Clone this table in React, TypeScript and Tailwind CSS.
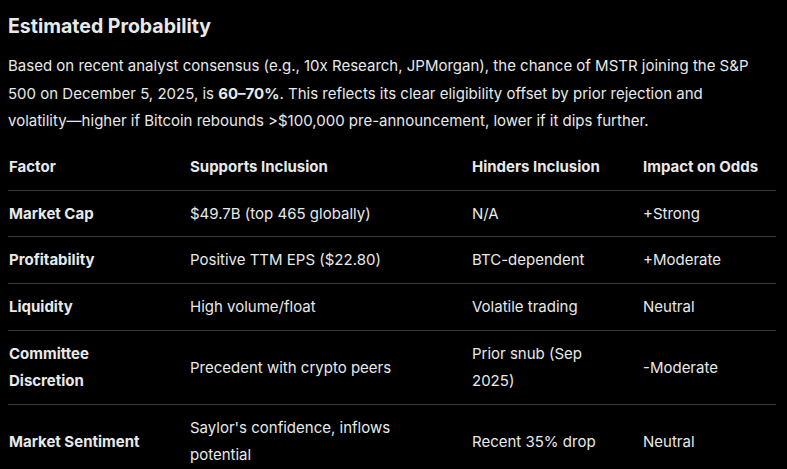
import React from "react";

const rows: { f: string[]; s: string[]; h: string[]; i: string }[] = [
  { f: ["Market Cap"], s: ["$49.7B (top 465 globally)"], h: ["N/A"], i: "+Strong" },
  { f: ["Profitability"], s: ["Positive TTM EPS ($22.80)"], h: ["BTC-dependent"], i: "+Moderate" },
  { f: ["Liquidity"], s: ["High volume/float"], h: ["Volatile trading"], i: "Neutral" },
  { f: ["Committee", "Discretion"], s: ["Precedent with crypto peers"], h: ["Prior snub (Sep", "2025)"], i: "-Moderate" },
  { f: ["Market Sentiment"], s: ["Saylor's confidence, inflows", "potential"], h: ["Recent 35% drop"], i: "Neutral" },
];

function Lines({ l }: { l: string[] }) {
  return (
    <>
      {l.map((x, k) => (
        <div key={k}>{x}</div>
      ))}
    </>
  );
}

export default function App() {
  return (
    <div
      className="min-h-[469px] w-[787px] bg-black text-[#e7e9ea] px-2 pt-[12px]"
      style={{ fontFamily: 'Inter, "Noto Sans", sans-serif' }}
    >
      <h2 className="text-[19.5px] leading-[28px] font-bold">Estimated Probability</h2>
      <div className="mt-[12px] text-[15px] leading-[27.5px]">
        <div>Based on recent analyst consensus (e.g., 10x Research, JPMorgan), the chance of MSTR joining the S&amp;P</div>
        <div>
          500 on December 5, 2025, is <b className="font-bold">60–70%</b>. This reflects its clear eligibility offset by
          prior rejection and
        </div>
        <div>volatility—higher if Bitcoin rebounds &gt;$100,000 pre-announcement, lower if it dips further.</div>
      </div>
      <table className="mt-[8px] w-[768px] table-fixed border-collapse text-[15px] leading-[27px]">
        <colgroup>
          <col className="w-[182px]" />
          <col className="w-[282px]" />
          <col className="w-[171px]" />
          <col className="w-[133px]" />
        </colgroup>
        <thead>
          <tr className="border-b border-[#3a3a3a]">
            <th className="py-[10px] pl-px text-left font-bold">Factor</th>
            <th className="py-[10px] text-left font-bold">Supports Inclusion</th>
            <th className="py-[10px] text-left font-bold">Hinders Inclusion</th>
            <th className="py-[10px] text-left font-bold">Impact on Odds</th>
          </tr>
        </thead>
        <tbody>
          {rows.map((r, k) => {
            const pad = k === 0 ? "py-[9px]" : "py-[9.5px]";
            return (
              <tr key={k} className={k < rows.length - 1 ? "border-b border-[#3a3a3a]" : ""}>
                <td className={`${pad} pl-px align-middle font-bold`}>
                  <Lines l={r.f} />
                </td>
                <td className={`${pad} align-middle`}>
                  <Lines l={r.s} />
                </td>
                <td className={`${pad} align-middle`}>
                  <Lines l={r.h} />
                </td>
                <td className={`${pad} align-middle`}>{r.i}</td>
              </tr>
            );
          })}
        </tbody>
      </table>
    </div>
  );
}
